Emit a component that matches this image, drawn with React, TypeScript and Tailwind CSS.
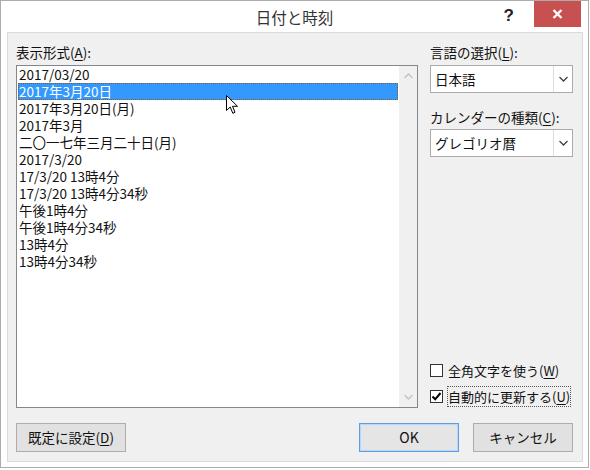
import React from 'react';

const formats = [
  '2017/03/20',
  '2017年3月20日',
  '2017年3月20日(月)',
  '2017年3月',
  '二〇一七年三月二十日(月)',
  '2017/3/20',
  '17/3/20 13時4分',
  '17/3/20 13時4分34秒',
  '午後1時4分',
  '午後1時4分34秒',
  '13時4分',
  '13時4分34秒',
];

function Chevron({ up = false, color = '#606060' }: { up?: boolean; color?: string }) {
  return (
    <svg width="9" height="6" viewBox="0 0 9 6">
      <polyline
        points={up ? '0.5,5 4.5,1 8.5,5' : '0.5,1 4.5,5 8.5,1'}
        fill="none"
        stroke={color}
        strokeWidth="1.3"
      />
    </svg>
  );
}

function Select({ value }: { value: string }) {
  return (
    <div className="flex h-[28px] border border-[#acacac] bg-white">
      <div className="flex-1 pl-[4px] leading-[26px]">{value}</div>
      <div className="w-[19px] border-l border-[#dcdcdc] bg-white flex items-center justify-center">
        <Chevron color="#404040" />
      </div>
    </div>
  );
}

function Check({ checked, label, keyChar, focused }: { checked?: boolean; label: string; keyChar: string; focused?: boolean }) {
  return (
    <div className="flex items-center h-[21px] whitespace-nowrap">
      <div className="shrink-0 w-[13px] h-[13px] border border-[#333] bg-white flex items-center justify-center">
        {checked && (
          <svg width="11" height="11" viewBox="0 0 11 11">
            <polyline points="1.5,5.5 4.2,8.3 9.5,2" fill="none" stroke="#000" strokeWidth="2" />
          </svg>
        )}
      </div>
      <div
        className={`ml-[4px] h-[21px] px-[1px] leading-[21px] text-[13px] ${
          focused ? 'outline-1 outline-dotted outline-[#555] -outline-offset-1' : ''
        }`}
      >
        {label}(<span className="underline underline-offset-2">{keyChar}</span>)
      </div>
    </div>
  );
}

export default function App() {
  return (
    <div className="w-[590px] h-[470px] bg-white text-[13.5px] text-[#111] font-['Noto_Sans_CJK_JP',sans-serif]">
      <div className="w-[589px] h-[468px] border border-[#acacac] bg-white flex flex-col">
        {/* title bar */}
        <div className="h-[31px] grid grid-cols-[1fr_auto_1fr]">
          <div />
          <div className="text-[15.5px] text-[#333] leading-[31px] pt-[1px]">日付と時刻</div>
          <div className="flex justify-end items-start">
            <div className="mt-[4px] mr-[20px] text-[17px] font-bold text-[#222] leading-[22px] font-['Liberation_Sans',sans-serif]">?</div>
            <div className="mr-[7px] w-[47px] h-[26px] bg-[#c75050] flex items-center justify-center">
              <svg width="11" height="10" viewBox="0 0 11 10">
                <path d="M1.5 1 L9.5 9 M9.5 1 L1.5 9" stroke="#fff" strokeWidth="2.3" />
              </svg>
            </div>
          </div>
        </div>

        {/* panel */}
        <div className="ml-[6px] w-[576px] h-[430px] border border-[#dadada] bg-[#f0f0f0] flex flex-col pt-[11px] pl-[8px] pr-[9px] pb-[9px]">
          <div className="flex gap-[12px] h-[364px]">
            {/* left column */}
            <div className="w-[402px] flex flex-col">
              <div className="h-[17px] leading-[17px] mb-[4px]">
                表示形式(<span className="underline underline-offset-2">A</span>):
              </div>
              <div className="relative h-[343px] border border-[#828790] bg-white flex">
                <div className="flex-1 flex flex-col">
                  {formats.map((f, i) => (
                    <div
                      key={i}
                      className={`mx-[1px] pl-[1px] h-[17px] leading-[17px] whitespace-nowrap ${
                        i === 1 ? 'bg-[#3399ff] text-white outline-1 outline-dotted outline-[#8a5a20] -outline-offset-1' : ''
                      }`}
                    >
                      {f}
                    </div>
                  ))}
                </div>
                <div className="w-[18px] bg-[#f0f0f0] flex flex-col items-center justify-between py-[7px]">
                  <Chevron up color="#c2c2c2" />
                  <Chevron color="#c2c2c2" />
                </div>
                {/* mouse pointer */}
                <svg className="absolute left-[209px] top-[29px]" width="14" height="20" viewBox="0 0 14 20">
                  <path
                    d="M0.5 0.5 L0.5 15.5 L4.2 12 L6.8 18.3 L9 17.3 L6.5 11.3 L11.5 11.3 Z"
                    fill="#fff"
                    stroke="#000"
                    strokeWidth="1"
                    strokeLinejoin="round"
                  />
                </svg>
              </div>
            </div>

            {/* right column */}
            <div className="w-[143px] flex flex-col">
              <div className="h-[17px] leading-[17px] mb-[4px] whitespace-nowrap">
                言語の選択(<span className="underline underline-offset-2">L</span>):
              </div>
              <Select value="日本語" />
              <div className="mt-[16px] h-[17px] leading-[17px] mb-[3px] whitespace-nowrap">
                カレンダーの種類(<span className="underline underline-offset-2">C</span>):
              </div>
              <Select value="グレゴリオ暦" />
              <div className="mt-auto flex flex-col gap-[5px] mb-[1px]">
                <Check label="全角文字を使う" keyChar="W" />
                <Check checked focused label="自動的に更新する" keyChar="U" />
              </div>
            </div>
          </div>

          {/* buttons */}
          <div className="mt-[15px] flex h-[29px]">
            <button className="w-[110px] h-[29px] border border-[#adadad] bg-[#e1e1e1] text-[#111]">
              既定に設定(<span className="underline underline-offset-2">D</span>)
            </button>
            <button className="ml-auto w-[100px] h-[29px] border border-[#5c9fe4] shadow-[inset_0_0_0_1px_#b9d7f5] bg-[#e5e5e5] text-[14px] text-[#111]">
              OK
            </button>
            <button className="ml-[14px] w-[100px] h-[29px] border border-[#adadad] bg-[#e1e1e1] text-[#111]">
              キャンセル
            </button>
          </div>
        </div>
      </div>
    </div>
  );
}
